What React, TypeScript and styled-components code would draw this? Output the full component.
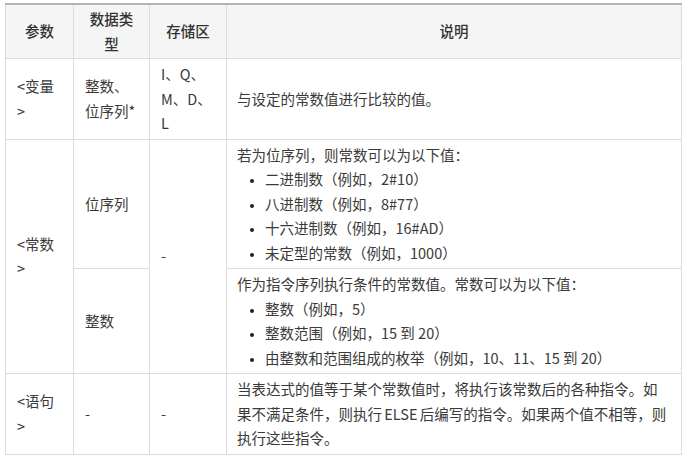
import styled, { createGlobalStyle } from "styled-components";

const GlobalStyle = createGlobalStyle`
  body {
    margin: 0;
    background: #fff;
    font-family: "Noto Sans CJK SC", "Noto Sans", sans-serif;
    color: #333;
  }
`;

const Page = styled.div`
  padding: 3px 5px 0 5px;
`;

const Table = styled.table`
  width: 677px;
  table-layout: fixed;
  border-collapse: collapse;
  border-top: 2px solid #b4b4b4;
  font-size: 14.5px;
  line-height: 24.5px;
  text-spacing-trim: space-all;
`;

const Th = styled.th`
  background: #f5f5f5;
  border: 1px solid #dcdcdc;
  border-top: none;
  padding: 2px 11px;
  font-weight: 500;
  color: #333;
  text-align: center;
  vertical-align: middle;
`;

const Td = styled.td`
  border: 1px solid #dcdcdc;
  padding: 3px 11px 3px 11px;
  text-align: left;
  vertical-align: middle;
  color: #3a3a3a;
  word-break: normal;
`;

// tight word spacing keeps the long paragraph wrapping like the original
const DescCell = styled(Td)<{ $tight?: boolean }>`
  padding: 3px 11px 3px 10px;
  word-spacing: ${(p) => (p.$tight ? "-1px" : "normal")};
`;

const Para = styled.p`
  margin: 0;
`;

const List = styled.ul`
  margin: 0;
  padding-left: 28px;
  list-style: disc;
  li::marker {
    font-size: 10px;
    color: #222;
  }
`;

interface IListBlock {
  intro: string;
  items: string[];
}

const bitValues: IListBlock = {
  intro: "若为位序列，则常数可以为以下值：",
  items: [
    "二进制数（例如，2#10）",
    "八进制数（例如，8#77）",
    "十六进制数（例如，16#AD）",
    "未定型的常数（例如，1000）",
  ],
};

const intValues: IListBlock = {
  intro: "作为指令序列执行条件的常数值。常数可以为以下值：",
  items: [
    "整数（例如，5）",
    "整数范围（例如，15 到 20）",
    "由整数和范围组成的枚举（例如，10、11、15 到 20）",
  ],
};

function ListBlock({ block }: { block: IListBlock }) {
  return (
    <>
      <Para>{block.intro}</Para>
      <List>
        {block.items.map((item) => (
          <li key={item}>{item}</li>
        ))}
      </List>
    </>
  );
}

function App() {
  return (
    <Page lang="zh-CN">
      <GlobalStyle />
      <Table>
        <colgroup>
          <col style={{ width: 68 }} />
          <col style={{ width: 76 }} />
          <col style={{ width: 77 }} />
          <col />
        </colgroup>
        <thead>
          <tr>
            <Th>参数</Th>
            <Th>数据类型</Th>
            <Th>存储区</Th>
            <Th>说明</Th>
          </tr>
        </thead>
        <tbody>
          <tr>
            <Td>&lt;变量&gt;</Td>
            <Td>整数、位序列*</Td>
            <Td>I、Q、M、D、L</Td>
            <DescCell>与设定的常数值进行比较的值。</DescCell>
          </tr>
          <tr>
            <Td rowSpan={2}>&lt;常数&gt;</Td>
            <Td>位序列</Td>
            <Td rowSpan={2}>-</Td>
            <DescCell>
              <ListBlock block={bitValues} />
            </DescCell>
          </tr>
          <tr>
            <Td>整数</Td>
            <DescCell>
              <ListBlock block={intValues} />
            </DescCell>
          </tr>
          <tr>
            <Td>&lt;语句&gt;</Td>
            <Td>-</Td>
            <Td>-</Td>
            <DescCell $tight>
              当表达式的值等于某个常数值时，将执行该常数后的各种指令。如果不满足条件，则执行 ELSE 后编写的指令。如果两个值不相等，则执行这些指令。
            </DescCell>
          </tr>
        </tbody>
      </Table>
    </Page>
  );
}

export default App;
